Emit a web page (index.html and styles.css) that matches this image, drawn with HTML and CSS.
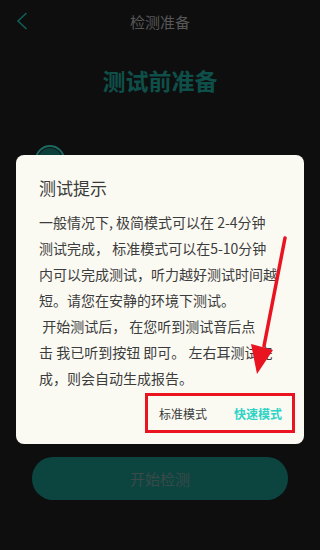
FILE: index.html
```html
<!DOCTYPE html>
<html lang="zh-CN">
<head>
<meta charset="utf-8">
<title>检测准备</title>
<link rel="stylesheet" href="styles.css">
</head>
<body>
<div class="page">
  <header class="topbar">
    <svg class="back" width="12" height="18" viewBox="0 0 12 18"><path d="M10.5 1 L2 9 L10.5 17" fill="none" stroke="#0f5f59" stroke-width="1.6"/></svg>
    <div class="topbar-title">检测准备</div>
  </header>
  <h1 class="hero">测试前准备</h1>
  <div class="ring"></div>
  <button class="start">开始检测</button>

  <div class="dialog">
    <div class="dialog-title">测试提示</div>
    <div class="dialog-body">
      <div>一般情况下, 极简模式可以在 2-4分钟</div>
      <div>测试完成， 标准模式可以在5-10分钟</div>
      <div>内可以完成测试，听力越好测试时间越</div>
      <div>短。请您在安静的环境下测试。</div>
      <div>&nbsp;开始测试后， 在您听到测试音后点</div>
      <div>击 我已听到按钮 即可。 左右耳测试完</div>
      <div>成，则会自动生成报告。</div>
    </div>
    <div class="dialog-actions">
      <span class="act">标准模式</span>
      <span class="act act-primary">快速模式</span>
    </div>
    <div class="mark-box"></div>
  </div>

  <svg class="arrow" width="320" height="550" viewBox="0 0 320 550">
    <line x1="285" y1="238" x2="264" y2="346" stroke="#ea1421" stroke-width="3.5" stroke-linecap="round"/>
    <polygon points="251,344 273,350 257,374" fill="#ea1421"/>
  </svg>
</div>
</body>
</html>
```
FILE: styles.css
```css
* { box-sizing: border-box; }
html, body { margin: 0; padding: 0; }
body {
  background: #0e0e0e;
  font-family: "Noto Sans CJK SC", sans-serif;
}
.page {
  position: relative;
  width: 320px;
  height: 550px;
  overflow: hidden;
  display: flex;
  flex-direction: column;
}
.topbar {
  position: relative;
  height: 44px;
  display: flex;
  align-items: center;
  justify-content: center;
}
.back {
  position: absolute;
  left: 16px;
  top: 12px;
}
.topbar-title {
  font-size: 15px;
  color: #575757;
  line-height: 20px;
}
.hero {
  margin: 20px 0 0;
  font-size: 23px;
  line-height: 32px;
  font-weight: 700;
  color: #0f4f4a;
  text-align: center;
}
.ring {
  margin: 49px 0 0 35px;
  width: 30px;
  height: 30px;
  border-radius: 50%;
  border: 2px solid #1c6760;
  background: #0c3e3a;
  box-shadow: inset 0 0 0 1px #0e0e0e;
}
.start {
  margin: 282px 32px 0;
  height: 43px;
  border: none;
  border-radius: 21px;
  background: #0c4540;
  color: #3a4a48;
  font-family: inherit;
  font-size: 15px;
  padding: 0;
}
.dialog {
  position: absolute;
  left: 16px;
  top: 155px;
  width: 288px;
  height: 289px;
  background: #fafaf3;
  border-radius: 8px;
  padding: 21px 22px 0 23px;
  display: flex;
  flex-direction: column;
}
.dialog-title {
  font-size: 17px;
  line-height: 24px;
  color: #3a3a3a;
}
.dialog-body {
  margin-top: 9px;
  font-size: 14px;
  line-height: 26px;
  color: #3c3c3c;
  white-space: nowrap;
}
.dialog-actions {
  margin-top: 7px;
  height: 30px;
  display: flex;
  align-items: center;
  justify-content: flex-end;
  gap: 27px;
}
.act {
  font-size: 12px;
  color: #3a3a3a;
}
.act-primary {
  color: #2fd3c6;
  font-weight: 700;
}
.mark-box {
  position: absolute;
  left: 129px;
  top: 238px;
  width: 150px;
  height: 40px;
  border: 3px solid #ea1421;
}
.arrow {
  position: absolute;
  left: 0;
  top: 0;
  pointer-events: none;
}
```
